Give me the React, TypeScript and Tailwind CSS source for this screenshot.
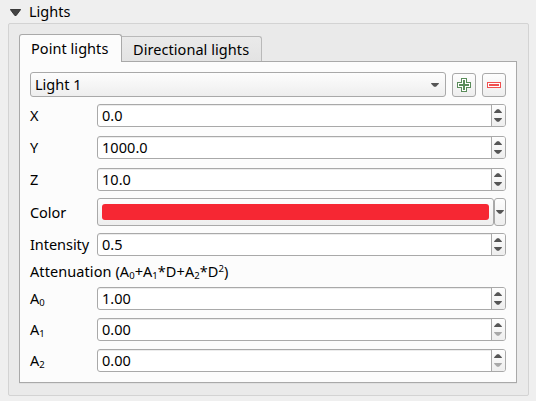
import type { ReactNode } from 'react';

function Arrow({ up = false, muted = false }: { up?: boolean; muted?: boolean }) {
  return (
    <svg width="8" height="4" viewBox="0 0 8 4" className={up ? 'block' : 'block rotate-180'}>
      <path d="M0 4 L0.4 3 L3 0.2 H5 L7.6 3 L8 4 Z" fill={muted ? '#a8a8a8' : '#555555'} />
    </svg>
  );
}

function Spin({ value, atMin = false }: { value: string; atMin?: boolean }) {
  return (
    <div className="flex h-[23px] w-[409px] overflow-hidden rounded-[3px] border border-[#a9a9a9] bg-white shadow-[inset_0_1px_0_#ececec]">
      <div className="flex-1 pl-1 leading-[20px] tracking-[0.05px]">{value}</div>
      <div className="flex w-[14px] flex-col items-center gap-[5px] border-l border-[#a9a9a9] bg-linear-to-b from-[#fdfdfd] to-[#eeeeee] pr-px pt-1">
        <Arrow up />
        <Arrow muted={atMin} />
      </div>
    </div>
  );
}

function Row({ label, children, className = '' }: { label: ReactNode; children: ReactNode; className?: string }) {
  return (
    <div className={`flex items-center ${className}`}>
      <div className="w-[67px] whitespace-nowrap pb-0.5 leading-[20px] tracking-[-0.05px]">{label}</div>
      {children}
    </div>
  );
}

function Sub({ children }: { children: ReactNode }) {
  return <span className="relative top-0.5 text-[9.5px] leading-none tracking-normal">{children}</span>;
}

const button = 'border border-[#a9a9a9] bg-linear-to-b from-[#fdfdfd] to-[#eeeeee]';

export default function App() {
  return (
    <div className="h-[401px] w-[536px] overflow-hidden bg-[#efefef] font-['Noto_Sans',sans-serif] text-[14.5px] text-black">
      <div className="flex h-[23px] items-center pl-2.5">
        <svg width="11" height="7" viewBox="0 0 11 7" className="mt-0.5">
          <path d="M0.3 0.5 H10.7 L6.2 6.5 H4.8 Z" fill="#444" stroke="#222" strokeWidth=".8" />
        </svg>
        <span className="ml-2 pb-0.5 leading-[20px]">Lights</span>
      </div>

      <div className="ml-2 h-[373px] w-[521px] rounded-[2px] border border-[#d3d3d3] bg-[#eaeaea] pl-2.5 pt-2.5">
        <div className="flex h-[27px] items-end">
          <div className="z-10 -mb-px h-7 w-[103px] rounded-t-[3px] border border-b-0 border-[#a9a9a9] bg-[#fcfcfc] pl-[11px] leading-[26px] tracking-[0.05px]">
            Point lights
          </div>
          <div className="-ml-px h-[25px] w-[141px] rounded-tr-[3px] border border-b-0 border-[#b9b9b9] bg-linear-to-b from-[#eaeaea] to-[#e3e3e3] pl-[11px] leading-[24px] tracking-[0.06px]">
            Directional lights
          </div>
        </div>

        <div className="h-[322px] w-[498px] border border-[#a9a9a9] bg-[#fcfcfc] pl-2.5 pt-2.5 shadow-[0_1px_0_#e0e0e0]">
          <div className="flex items-center">
            <div className={`flex h-[25px] w-[416px] items-center justify-between rounded-[3px] pl-1 pr-[6px] ${button}`}>
              <span className="pb-0.5 leading-[20px]">Light 1</span>
              <Arrow />
            </div>
            <div className={`ml-1.5 flex h-6 w-6 items-center justify-center rounded-[3px] ${button}`}>
              <svg width="14" height="14" viewBox="0 0 14 14" shapeRendering="crispEdges">
                <path d="M4.5 .5 H9.5 V4.5 H13.5 V9.5 H9.5 V13.5 H4.5 V9.5 H.5 V4.5 H4.5 Z" fill="white" stroke="#5a8c5a" />
                <path d="M6 2 H8 V6 H12 V8 H8 V12 H6 V8 H2 V6 H6 Z" fill="#5a8c5a" />
              </svg>
            </div>
            <div className={`ml-1.5 flex h-6 w-6 items-center justify-center rounded-[3px] ${button}`}>
              <svg width="14" height="6" viewBox="0 0 14 6" shapeRendering="crispEdges">
                <rect x=".5" y=".5" width="13" height="5" fill="white" stroke="#f05050" />
                <rect x="2" y="2" width="10" height="2" fill="#f05050" />
              </svg>
            </div>
          </div>

          <Row label="X" className="mt-[7px]"><Spin value="0.0" /></Row>
          <Row label="Y" className="mt-[9px]"><Spin value="1000.0" /></Row>
          <Row label="Z" className="mt-[9px]"><Spin value="10.0" /></Row>
          <Row label={<span className="relative top-px">Color</span>} className="mt-[7px]">
            <div className={`flex h-7 w-[397px] rounded-[3px] px-1 pt-[5px] ${button}`}>
              <div className="h-4 w-full rounded-[3px] bg-[#f62733]" />
            </div>
            <div className={`flex h-7 w-3 items-center justify-center rounded-[3px] ${button}`}>
              <Arrow />
            </div>
          </Row>
          <Row label="Intensity" className="mt-[7px]"><Spin value="0.5" /></Row>
          <div className="h-[31px] whitespace-nowrap leading-[30px] tracking-[0.08px]">
            Attenuation (A<Sub>0</Sub>+A<Sub>1</Sub>*D+A<Sub>2</Sub>*D
            <span className="relative -top-[5px] text-[9.5px] leading-none">2</span>)
          </div>
          <Row label={<>A<Sub>0</Sub></>}><Spin value="1.00" /></Row>
          <Row label={<>A<Sub>1</Sub></>} className="mt-2"><Spin value="0.00" atMin /></Row>
          <Row label={<>A<Sub>2</Sub></>} className="mt-2"><Spin value="0.00" atMin /></Row>
        </div>
      </div>
    </div>
  );
}
